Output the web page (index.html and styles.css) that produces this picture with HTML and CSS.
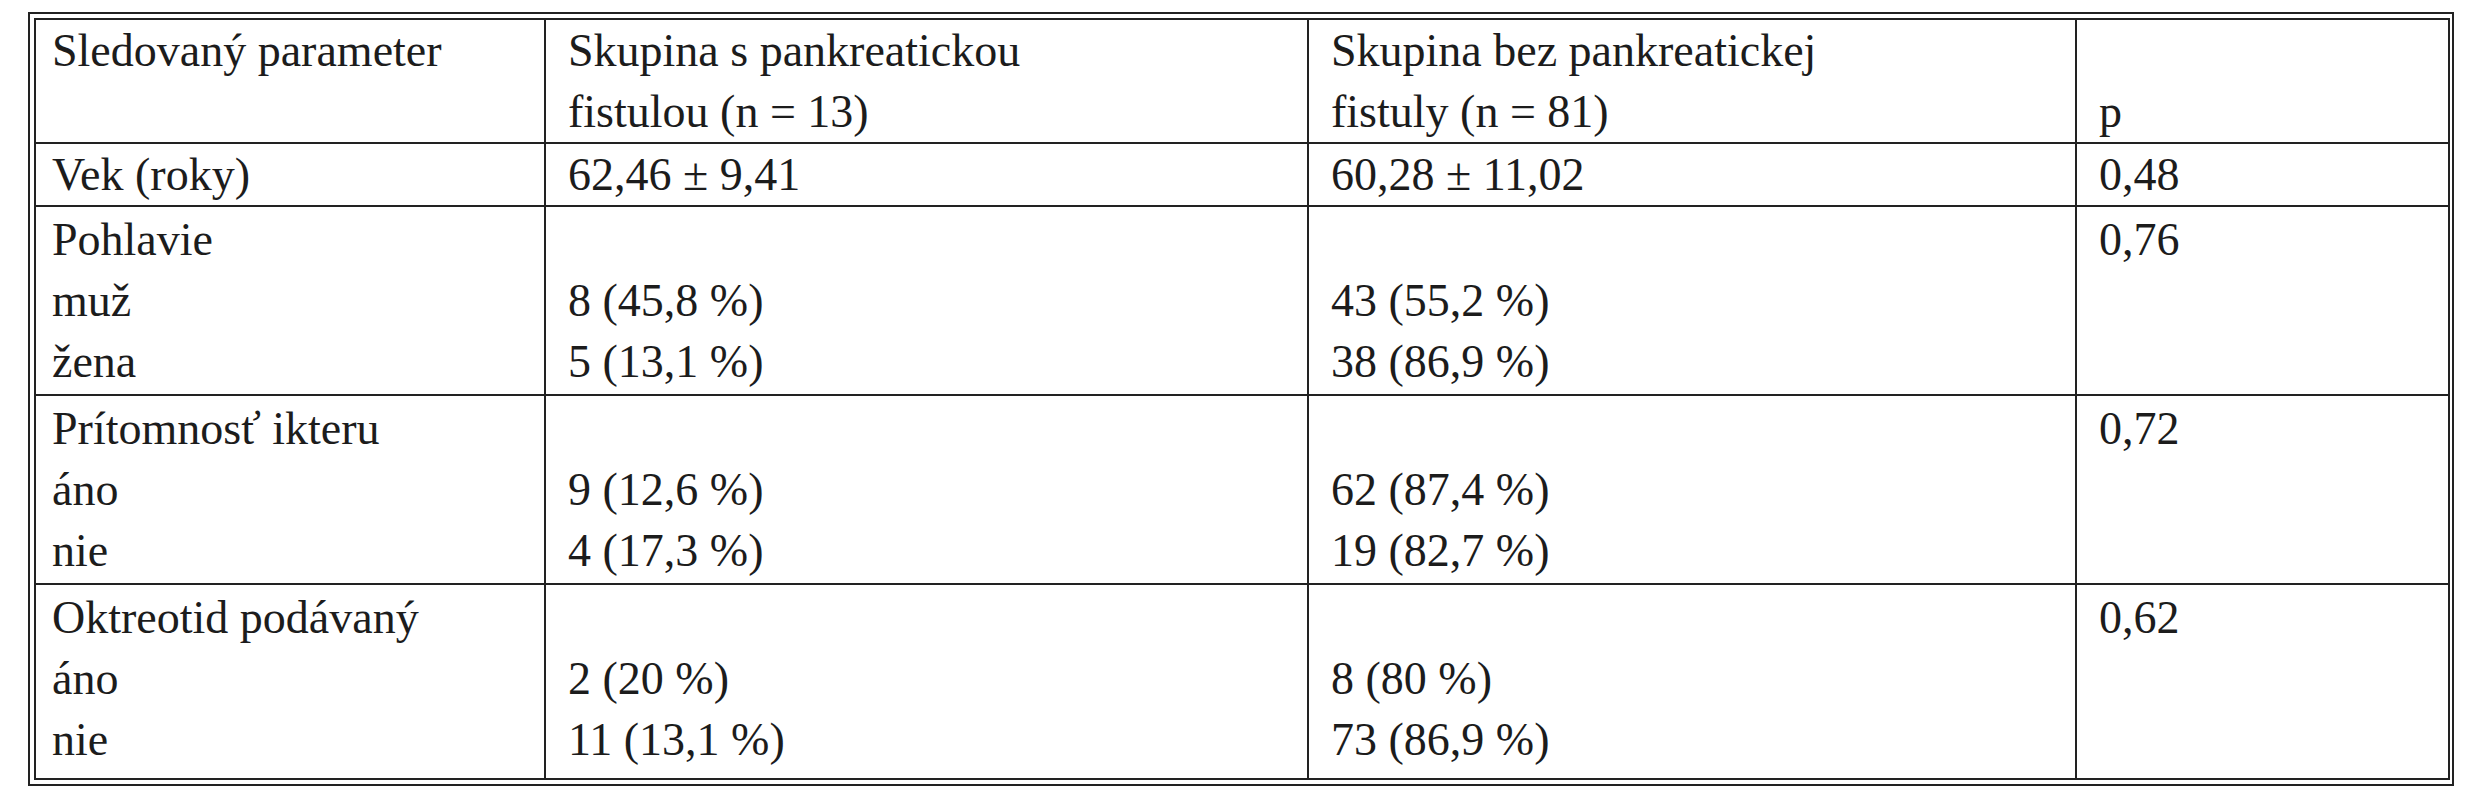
FILE: index.html
```html
<!DOCTYPE html>
<html lang="sk">
<head>
<meta charset="utf-8">
<title>Tabuľka</title>
<link rel="stylesheet" href="styles.css">
</head>
<body>
<div class="frame">
  <table class="data">
    <colgroup>
      <col class="c1">
      <col class="c2">
      <col class="c3">
      <col class="c4">
    </colgroup>
    <tr class="head">
      <td>Sledovaný parameter</td>
      <td>Skupina s pankreatickou<br>fistulou (n = 13)</td>
      <td>Skupina bez pankreatickej<br>fistuly (n = 81)</td>
      <td class="bottom">p</td>
    </tr>
    <tr class="single">
      <td>Vek (roky)</td>
      <td>62,46 ± 9,41</td>
      <td>60,28 ± 11,02</td>
      <td>0,48</td>
    </tr>
    <tr class="grp">
      <td>Pohlavie<br>muž<br>žena</td>
      <td><br>8 (45,8 %)<br>5 (13,1 %)</td>
      <td><br>43 (55,2 %)<br>38 (86,9 %)</td>
      <td>0,76</td>
    </tr>
    <tr class="grp">
      <td>Prítomnosť ikteru<br>áno<br>nie</td>
      <td><br>9 (12,6 %)<br>4 (17,3 %)</td>
      <td><br>62 (87,4 %)<br>19 (82,7 %)</td>
      <td>0,72</td>
    </tr>
    <tr class="grp last">
      <td>Oktreotid podávaný<br>áno<br>nie</td>
      <td><br>2 (20 %)<br>11 (13,1 %)</td>
      <td><br>8 (80 %)<br>73 (86,9 %)</td>
      <td>0,62</td>
    </tr>
  </table>
</div>
</body>
</html>
```
FILE: styles.css
```css
html, body {
  margin: 0;
  padding: 0;
  background: #ffffff;
}

body {
  padding: 12px 0 0 28px;
  font-family: "Liberation Serif", "Times New Roman", serif;
  color: #1c1c1c;
}

.frame {
  width: 2414px;
  border: 2px solid #222222;
  padding: 4px;
}

.data {
  width: 2414px;
  table-layout: fixed;
  border-collapse: collapse;
  border: 2px solid #222222;
  font-size: 46px;
  line-height: 61px;
}

.c1 { width: 510px; }
.c2 { width: 763px; }
.c3 { width: 768px; }
.c4 { width: 373px; }

.data td {
  border: 2px solid #222222;
  padding: 0 0 0 22px;
  vertical-align: top;
  white-space: nowrap;
}

.data td:first-child {
  padding-left: 16px;
}

.data td.bottom {
  vertical-align: bottom;
}

.single td {
  padding-top: 0;
  padding-bottom: 0;
}

.grp td {
  padding-top: 2px;
  padding-bottom: 2px;
}

.grp.last td {
  padding-bottom: 8px;
}
```
